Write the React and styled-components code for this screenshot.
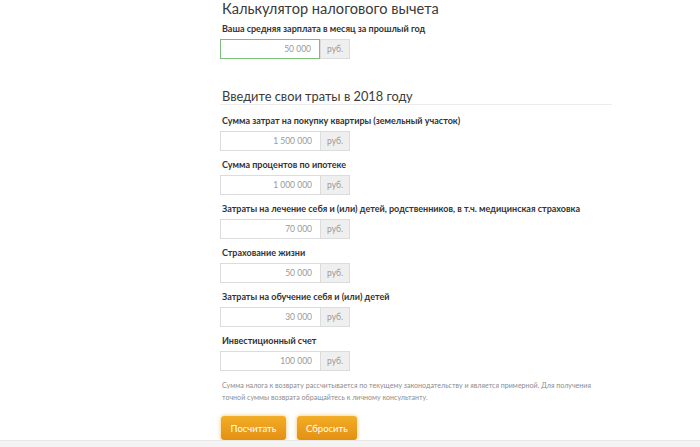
import React from "react";
import styled, { createGlobalStyle } from "styled-components";

const GlobalStyle = createGlobalStyle`
  html, body {
    margin: 0;
    padding: 0;
    background: #fff;
  }
  body {
    font-family: Lato, "Open Sans", sans-serif;
    color: #333;
    overflow: hidden;
  }
`;

const Page = styled.div`
  width: 700px;
  height: 447px;
  display: flex;
  flex-direction: column;
  overflow: hidden;
`;

const Content = styled.div`
  margin-left: 220px;
  width: 392px;
  flex: 1;
`;

const Title = styled.h1`
  margin: 0 0 0 2px;
  font-size: 14.6px;
  line-height: 18px;
  font-weight: 400;
  color: #3a3a3a;
  white-space: nowrap;
`;

const SectionTitle = styled.h2`
  margin: 29px 0 0;
  padding-left: 2px;
  font-size: 12.8px;
  line-height: 16px;
  font-weight: 400;
  color: #3a3a3a;
  border-bottom: 1px solid #ececec;
`;

const Field = styled.div`
  margin-top: ${(p) => p.$top}px;
`;

const Label = styled.div`
  padding-left: 2px;
  font-size: 9px;
  line-height: 12px;
  font-weight: 700;
  color: #333;
  white-space: nowrap;
`;

const InputRow = styled.div`
  display: flex;
  margin-top: 4px;
  height: 20px;
`;

const Input = styled.div`
  box-sizing: border-box;
  width: 100px;
  height: 20px;
  border: 1px solid ${(p) => (p.$focus ? "#7cbf7a" : "#dcdcdc")};
  border-right: ${(p) => (p.$focus ? "1px solid #7cbf7a" : "none")};
  background: #fff;
  padding-right: 8px;
  font-size: 8.5px;
  line-height: 18px;
  color: #999;
  text-align: right;
`;

const Unit = styled.div`
  box-sizing: border-box;
  width: 30px;
  height: 20px;
  border: 1px solid #dcdcdc;
  background: #efefef;
  font-size: 8.5px;
  line-height: 18px;
  color: #999;
  text-align: center;
`;

const Note = styled.p`
  margin: 9px 0 0 2px;
  font-size: 7.1px;
  line-height: 12px;
  color: #8d8d8d;
  width: 382px;
`;

const Buttons = styled.div`
  display: flex;
  gap: 11px;
  margin-top: 12px;
  padding-left: 1px;
`;

const Button = styled.button`
  width: ${(p) => p.$w}px;
  height: 24px;
  border: none;
  border-radius: 3px;
  background: linear-gradient(#f3ad26, #e39012);
  box-shadow: 0 0 4px rgba(240, 170, 40, 0.7);
  color: #fff;
  font-family: Lato, "Open Sans", sans-serif;
  font-size: 9.5px;
  padding: 0;
`;

const Footer = styled.div`
  height: 6px;
  border-top: 1px solid #e8e8e8;
  background: #f3f3f3;
`;

const fields = [
  { label: "Сумма затрат на покупку квартиры (земельный участок)", value: "1 500 000" },
  { label: "Сумма процентов по ипотеке", value: "1 000 000" },
  {
    label: "Затраты на лечение себя и (или) детей, родственников, в т.ч. медицинская страховка",
    value: "70 000",
  },
  { label: "Страхование жизни", value: "50 000" },
  { label: "Затраты на обучение себя и (или) детей", value: "30 000" },
  { label: "Инвестиционный счет", value: "100 000" },
];

const MoneyField = ({ label, value, top, focus }) => (
  <Field $top={top}>
    <Label>{label}</Label>
    <InputRow>
      <Input $focus={focus}>{value}</Input>
      <Unit>руб.</Unit>
    </InputRow>
  </Field>
);

export default function App() {
  return (
    <Page>
      <GlobalStyle />
      <Content>
        <Title>Калькулятор налогового вычета</Title>
        <MoneyField
          label="Ваша средняя зарплата в месяц за прошлый год"
          value="50 000"
          top={5}
          focus
        />
        <SectionTitle>Введите свои траты в 2018 году</SectionTitle>
        {fields.map((f, i) => (
          <MoneyField key={f.label} label={f.label} value={f.value} top={i === 0 ? 10 : 8} />
        ))}
        <Note>
          Сумма налога к возврату рассчитывается по текущему законодательству и является примерной. Для получения
          точной суммы возврата обращайтесь к личному консультанту.
        </Note>
        <Buttons>
          <Button $w={65}>Посчитать</Button>
          <Button $w={60}>Сбросить</Button>
        </Buttons>
      </Content>
      <Footer />
    </Page>
  );
}
